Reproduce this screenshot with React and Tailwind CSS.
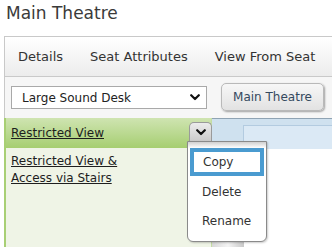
import React from "react";

function Chevron({ className = "" }) {
  return (
    <svg width="10" height="7" viewBox="0 0 10 7" className={className}>
      <polyline points="1.2,1.2 5,5 8.8,1.2" fill="none" stroke="#111" strokeWidth="2.2" strokeLinecap="round" strokeLinejoin="round" />
    </svg>
  );
}

export default function App() {
  return (
    <div className="relative w-[332px] h-[247px] overflow-hidden bg-white font-['DejaVu_Sans',sans-serif] text-[#333]">
      <div className="h-[36px] pl-[6px] pt-[3px] text-[17px] leading-[20px] text-[#3a3a3a]">Main Theatre</div>

      <div className="ml-[4px]">
        {/* Tab bar */}
        <div className="h-[41px] border-t border-b border-l border-[#c9c9c9] bg-gradient-to-b from-white to-[#ececec] flex items-center pl-[13px] gap-[27px] text-[13px] text-[#333] whitespace-nowrap">
          <span>Details</span>
          <span>Seat Attributes</span>
          <span>View From Seat</span>
        </div>

        {/* Toolbar */}
        <div className="h-[41px] border-l border-[#c9c9c9] bg-[#f6f6f6] flex items-start">
          <div className="ml-[6px] mt-[9px] w-[196px] h-[23px] border border-[#a9a9a9] bg-white flex items-center justify-between pl-[10px] pr-[6px] text-[12px] text-[#222]">
            <span>Large Sound Desk</span>
            <Chevron />
          </div>
          <div className="ml-[14px] mt-[6px] w-[103px] h-[28px] rounded-[5px] border border-[#b9b9b9] bg-gradient-to-b from-[#f7f7f7] to-[#e2e2e2] shadow-[1px_1px_2px_rgba(0,0,0,0.35)] flex items-center justify-center text-[12px] text-[#34495e] whitespace-nowrap">
            Main Theatre
          </div>
        </div>

        {/* Content */}
        <div className="flex h-[130px]">
          <div className="w-[208px] border-l-2 border-[#a8cf74] bg-[#eff4e6] border-r border-r-[#c5dca5]">
            <div className="h-[30px] bg-gradient-to-b from-[#cfe4b1] to-[#a6ce70] flex items-center pl-[5px] text-[12px] text-[#1e1e1e] underline">
              Restricted View
            </div>
            <div className="pl-[5px] pt-[5px] text-[12px] leading-[17px] text-[#1e1e1e] underline">
              Restricted View &amp;<br />Access via Stairs
            </div>
          </div>
          <div className="flex-1 flex flex-col">
            <div className="h-[31px] border-t border-[#8fa3b3] bg-[#cfe1ef] flex flex-col">
              <div className="mt-[6px] ml-[31px] flex-1 border-t border-l border-[#b3cbe0] bg-[#dbe9f5]"></div>
            </div>
            <div className="flex-1 bg-white flex flex-col justify-end">
              <div className="w-[32px] h-[8px] bg-gradient-to-r from-[#d8d8d8] via-[#f4f4f4] to-[#c8c8c8]"></div>
            </div>
          </div>
        </div>
      </div>

      {/* Dropdown tab button */}
      <div className="absolute left-[189px] top-[122px] w-[23px] h-[20px] rounded-t-[5px] border border-b-0 border-[#9a9a9a] bg-gradient-to-b from-[#ececec] to-[#c9c9c9] flex items-start justify-center pt-[6px]">
        <Chevron />
      </div>

      {/* Menu */}
      <div className="absolute left-[187px] top-[141px] w-[80px] h-[101px] rounded-b-[6px] border border-[#8a8a8a] bg-white shadow-[1px_1px_2px_rgba(0,0,0,0.2)] text-[12px] text-[#333]">
        <div className="h-[6px] bg-gradient-to-b from-[#d0d0d0] to-white"></div>
        <div className="mx-[2px] h-[28px] border-[4px] border-[#4a9bd0] flex items-center pl-[9px]">Copy</div>
        <div className="h-[30px] flex items-center pl-[14px] mt-[1px]">Delete</div>
        <div className="h-[28px] flex items-center pl-[14px]">Rename</div>
      </div>
    </div>
  );
}
